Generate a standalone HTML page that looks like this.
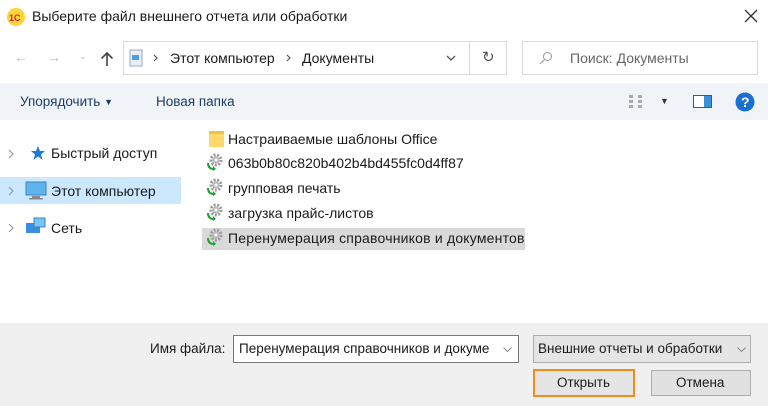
<!DOCTYPE html>
<html><head><meta charset="utf-8"><style>
*{box-sizing:border-box;margin:0;padding:0}
body{width:768px;height:406px;overflow:hidden;background:#fff;font-family:"Liberation Sans","DejaVu Sans",sans-serif;font-size:13.5px;color:#1a1a1a;position:relative}
.a{position:absolute;white-space:nowrap}
.box{position:absolute;border:1px solid #d9d9d9;background:#fff}
.f{font-size:14px}
</style></head><body>
<svg class="a" style="left:6px;top:7px" width="20" height="20"><circle cx="10" cy="10" r="9" fill="#ffd33a"/><text x="3" y="14" font-size="9" font-weight="bold" fill="#d2232a" font-family="Liberation Sans">1C</text></svg>
<div class="a" style="left:32px;top:8px;font-size:14px">Выберите файл внешнего отчета или обработки</div>
<svg class="a" style="left:744px;top:9px" width="14" height="14"><path d="M1 1L13 13M13 1L1 13" stroke="#333" stroke-width="1.3"/></svg>
<div class="a" style="left:14px;top:49px;color:#bbb;font-size:14px">←</div>
<div class="a" style="left:47px;top:49px;color:#bbb;font-size:14px">→</div>
<div class="a" style="left:79px;top:51px;color:#bbb;font-size:9px">⌄</div>
<svg class="a" style="left:100px;top:51px" width="14" height="16"><path d="M7 15V2M1.5 7.5L7 2l5.5 5.5" fill="none" stroke="#444" stroke-width="1.6"/></svg>
<div class="box" style="left:123px;top:41px;width:384px;height:34px"></div>
<div class="a" style="left:469px;top:41px;width:1px;height:34px;background:#d9d9d9"></div>
<svg class="a" style="left:129px;top:49px" width="14" height="18"><rect x="1" y="1" width="12" height="16" fill="#e7eef5" stroke="#9ab"/><rect x="3" y="6" width="7" height="5" fill="#4a9fe0"/></svg>
<svg class="a" style="left:153px;top:54px" width="6" height="8"><path d="M1 1l3 3-3 3" fill="none" stroke="#555" stroke-width="1.2"/></svg>
<div class="a" style="left:170px;top:50px;font-size:14px">Этот компьютер</div>
<svg class="a" style="left:286px;top:54px" width="6" height="8"><path d="M1 1l3 3-3 3" fill="none" stroke="#555" stroke-width="1.2"/></svg>
<div class="a" style="left:302px;top:50px;font-size:14px">Документы</div>
<svg class="a" style="left:446px;top:55px" width="10" height="6"><path d="M1 1l4 4 4-4" fill="none" stroke="#555" stroke-width="1.3"/></svg>
<div class="a" style="left:482px;top:48px;font-size:15px;color:#555">↻</div>
<div class="box" style="left:522px;top:41px;width:236px;height:34px"></div>
<svg class="a" style="left:539px;top:51px" width="14" height="14"><circle cx="8.5" cy="5.5" r="4" fill="none" stroke="#999"/><line x1="5.5" y1="8.5" x2="1" y2="13" stroke="#999"/></svg>
<div class="a" style="left:570px;top:50px;color:#666;font-size:14px">Поиск: Документы</div>
<div class="a" style="left:0;top:83px;width:768px;height:37px;background:#f0f4f9"></div>
<div class="a" style="left:20px;top:94px;color:#1e3a5f">Упорядочить <span style="font-size:9px;position:relative;top:-1px">▼</span></div>
<div class="a" style="left:156px;top:94px;color:#1e3a5f">Новая папка</div>
<svg class="a" style="left:629px;top:94px" width="20" height="16"><g fill="#aaa"><rect x="0" y="1" width="4" height="3"/><rect x="0" y="6" width="4" height="3"/><rect x="0" y="11" width="4" height="3"/><rect x="9" y="1" width="4" height="3"/><rect x="9" y="6" width="4" height="3"/><rect x="9" y="11" width="4" height="3"/></g></svg>
<div class="a" style="left:660px;top:96px;font-size:9px;color:#333">▼</div>
<svg class="a" style="left:693px;top:95px" width="20" height="14"><rect x="0.5" y="0.5" width="18" height="12" fill="#fff" stroke="#555"/><rect x="11" y="1" width="7" height="11" fill="#3b8fd9"/></svg>
<svg class="a" style="left:735px;top:92px" width="20" height="20"><circle cx="10" cy="10" r="9.5" fill="#1a6fd1"/><text x="6" y="15" font-size="14" font-weight="bold" fill="#fff" font-family="Liberation Sans">?</text></svg>
<div class="a" style="left:0;top:177px;width:181px;height:27px;background:#cce8ff"></div>
<svg class="a" style="left:8px;top:149px" width="6" height="10"><path d="M1 1l4 4-4 4" fill="none" stroke="#999" stroke-width="1.2"/></svg>
<svg class="a" style="left:8px;top:186px" width="6" height="10"><path d="M1 1l4 4-4 4" fill="none" stroke="#999" stroke-width="1.2"/></svg>
<svg class="a" style="left:8px;top:223px" width="6" height="10"><path d="M1 1l4 4-4 4" fill="none" stroke="#999" stroke-width="1.2"/></svg>
<svg class="a" style="left:29px;top:145px" width="16" height="16"><polygon points="9,1 11,6 16,6 12,9.5 13.5,15 9,11.5 4.5,15 6,9.5 2,6 7,6" fill="#1e7ad8"/></svg>
<div class="a" style="left:51px;top:145px;font-size:14px">Быстрый доступ</div>
<svg class="a" style="left:25px;top:181px" width="22" height="19"><rect x="1" y="1" width="20" height="13" fill="#5fb4ee" stroke="#3a80c0"/><rect x="7" y="15" width="8" height="2" fill="#888"/><rect x="4" y="17" width="14" height="1.5" fill="#888"/></svg>
<div class="a" style="left:51px;top:183px;font-size:14px">Этот компьютер</div>
<svg class="a" style="left:25px;top:217px" width="22" height="18"><rect x="1" y="6" width="14" height="10" fill="#3a8ee0"/><rect x="9" y="1" width="11" height="9" fill="#7cc4f4" stroke="#3a80c0"/></svg>
<div class="a" style="left:51px;top:220px;font-size:14px">Сеть</div>
<div class="a" style="left:202px;top:228px;width:323px;height:22px;background:#d9d9d9"></div>
<svg class="a" style="left:209px;top:130px" width="16" height="18"><rect x="0" y="1" width="15" height="16" rx="1" fill="#ffd86b"/><rect x="0" y="1" width="15" height="3" fill="#f0c040"/></svg>
<div class="a f" style="left:228px;top:131px">Настраиваемые шаблоны Office</div>
<div class="a f" style="left:228px;top:155px">063b0b80c820b402b4bd455fc0d4ff87</div>
<div class="a f" style="left:228px;top:180px">групповая печать</div>
<div class="a f" style="left:228px;top:205px">загрузка прайс-листов</div>
<div class="a f" style="left:228px;top:230px;letter-spacing:0.2px">Перенумерация справочников и документов</div>
<svg width="0" height="0" style="position:absolute"><defs><g id="g"><circle cx="10" cy="7" r="5" fill="none" stroke="#999" stroke-width="3" stroke-dasharray="2 1.5"/><circle cx="10" cy="7" r="3.5" fill="#bbb"/><circle cx="10" cy="7" r="1.5" fill="#fff"/><path d="M2 10 Q2 16 8 16" fill="none" stroke="#1aa32a" stroke-width="2"/><polygon points="7,13 10,16 7,18" fill="#1aa32a"/></g></defs></svg>
<svg class="a" style="left:206px;top:153px" width="18" height="19"><use href="#g"/></svg>
<svg class="a" style="left:206px;top:178px" width="18" height="19"><use href="#g"/></svg>
<svg class="a" style="left:206px;top:203px" width="18" height="19"><use href="#g"/></svg>
<svg class="a" style="left:206px;top:228px" width="18" height="19"><use href="#g"/></svg>
<div class="a" style="left:0;top:323px;width:768px;height:83px;background:#f0f0f0"></div>
<div class="a" style="left:150px;top:341px">Имя файла:</div>
<div class="a" style="left:233px;top:335px;width:286px;height:28px;background:#fff;border:1px solid #7a7a7a"></div>
<div class="a" style="left:239px;top:341px;width:257px;overflow:hidden">Перенумерация справочников и докуме</div>
<svg class="a" style="left:503px;top:347px" width="9" height="5"><path d="M0.5 0.5l4 4 4-4" fill="none" stroke="#888"/></svg>
<div class="a" style="left:533px;top:335px;width:218px;height:28px;background:#e5e5e5;border:1px solid #adadad"></div>
<div class="a" style="left:538px;top:341px">Внешние отчеты и обработки</div>
<svg class="a" style="left:737px;top:347px" width="9" height="5"><path d="M0.5 0.5l4 4 4-4" fill="none" stroke="#888"/></svg>
<div class="a" style="left:533px;top:369px;width:102px;height:28px;background:#e5e5e5;border:2px solid #f08c1a"></div>
<div class="a" style="left:557px;top:375px">Открыть</div>
<div class="a" style="left:651px;top:370px;width:100px;height:26px;background:#e1e1e1;border:1px solid #adadad"></div>
<div class="a" style="left:676px;top:375px">Отмена</div>
</body></html>
